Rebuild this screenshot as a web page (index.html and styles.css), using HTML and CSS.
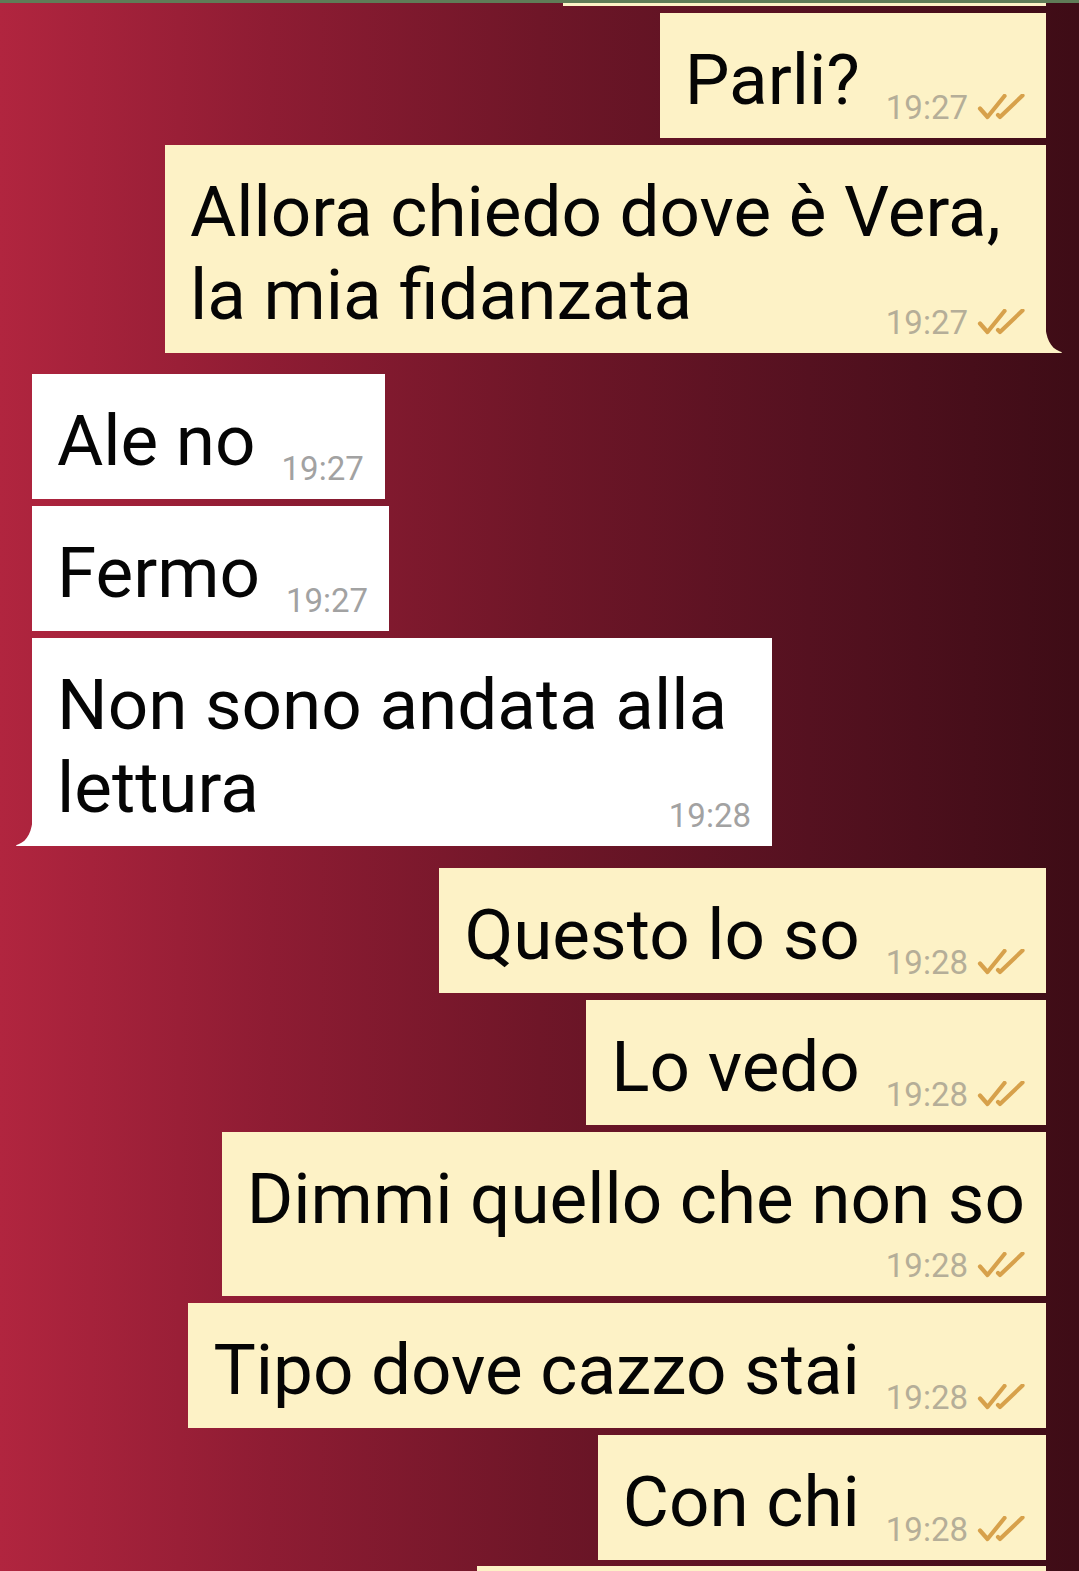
FILE: index.html
```html
<!DOCTYPE html>
<html lang="it">
<head>
<meta charset="utf-8">
<title>Chat</title>
<link rel="stylesheet" href="styles.css">
</head>
<body>
<div class="screen">
  <div class="topbar"></div>
  <div class="chat">
    <div class="bubble out frag-top"></div>

    <div class="bubble out">
      <span class="text">Parli?</span>
      <span class="meta"><span class="time">19:27</span><svg class="ticks" viewBox="0 0 48 26" width="48" height="26"><path d="M3 14.5 L10.5 23 L27.5 2"/><path d="M21 21 L23 23 L45.5 1.5"/></svg></span>
    </div>

    <div class="bubble out">
      <span class="text line-full">Allora chiedo dove è Vera,</span>
      <span class="text line-last">la mia fidanzata</span>
      <span class="meta"><span class="time">19:27</span><svg class="ticks" viewBox="0 0 48 26" width="48" height="26"><path d="M3 14.5 L10.5 23 L27.5 2"/><path d="M21 21 L23 23 L45.5 1.5"/></svg></span>
      <svg class="tail tail-right" viewBox="0 0 18 30" width="18" height="30"><path d="M0 0 C1 15 5 25 15 28.4 C17.6 29.2 17.4 30 15 30 L0 30 Z"/></svg>
    </div>

    <div class="bubble in group-start">
      <span class="text">Ale no</span>
      <span class="meta"><span class="time">19:27</span></span>
    </div>

    <div class="bubble in">
      <span class="text">Fermo</span>
      <span class="meta"><span class="time">19:27</span></span>
    </div>

    <div class="bubble in">
      <span class="text line-full">Non sono andata alla</span>
      <span class="text line-last">lettura</span>
      <span class="meta"><span class="time">19:28</span></span>
      <svg class="tail tail-left" viewBox="0 0 18 30" width="18" height="30"><path d="M18 0 C17 15 13 25 3 28.4 C0.4 29.2 0.6 30 3 30 L18 30 Z"/></svg>
    </div>

    <div class="bubble out group-start2">
      <span class="text">Questo lo so</span>
      <span class="meta"><span class="time">19:28</span><svg class="ticks" viewBox="0 0 48 26" width="48" height="26"><path d="M3 14.5 L10.5 23 L27.5 2"/><path d="M21 21 L23 23 L45.5 1.5"/></svg></span>
    </div>

    <div class="bubble out">
      <span class="text">Lo vedo</span>
      <span class="meta"><span class="time">19:28</span><svg class="ticks" viewBox="0 0 48 26" width="48" height="26"><path d="M3 14.5 L10.5 23 L27.5 2"/><path d="M21 21 L23 23 L45.5 1.5"/></svg></span>
    </div>

    <div class="bubble out stack">
      <span class="text">Dimmi quello che non so</span>
      <span class="meta"><span class="time">19:28</span><svg class="ticks" viewBox="0 0 48 26" width="48" height="26"><path d="M3 14.5 L10.5 23 L27.5 2"/><path d="M21 21 L23 23 L45.5 1.5"/></svg></span>
    </div>

    <div class="bubble out">
      <span class="text">Tipo dove cazzo stai</span>
      <span class="meta"><span class="time">19:28</span><svg class="ticks" viewBox="0 0 48 26" width="48" height="26"><path d="M3 14.5 L10.5 23 L27.5 2"/><path d="M21 21 L23 23 L45.5 1.5"/></svg></span>
    </div>

    <div class="bubble out">
      <span class="text">Con chi</span>
      <span class="meta"><span class="time">19:28</span><svg class="ticks" viewBox="0 0 48 26" width="48" height="26"><path d="M3 14.5 L10.5 23 L27.5 2"/><path d="M21 21 L23 23 L45.5 1.5"/></svg></span>
    </div>

    <div class="bubble out frag-bottom"></div>
  </div>
</div>
</body>
</html>
```

FILE: styles.css
```css
html, body {
  margin: 0;
  padding: 0;
}

body {
  width: 1079px;
  height: 1571px;
  overflow: hidden;
  font-family: Roboto, "Noto Sans", "Liberation Sans", sans-serif;
}

.screen {
  width: 1079px;
  height: 1571px;
  background: linear-gradient(to right, #b1253f 0%, #8e1c33 25%, #6f1628 50%, #551120 75%, #3e0c16 100%);
  overflow: hidden;
}

.topbar {
  height: 3px;
  background: #5f7c57;
}

.chat {
  display: flex;
  flex-direction: column;
  gap: 7px;
}

.bubble {
  position: relative;
  display: flex;
  flex-wrap: wrap;
  align-items: flex-end;
  justify-content: flex-end;
  column-gap: 26px;
  padding: 25px 21px 17px 25px;
  box-sizing: border-box;
}

.bubble.out {
  align-self: flex-end;
  margin-right: 33px;
  background: #fdf2c6;
  max-width: 881px;
}

.bubble.in {
  align-self: flex-start;
  margin-left: 32px;
  background: #ffffff;
  max-width: 740px;
}

.text {
  font-size: 71px;
  line-height: 83px;
  color: #050505;
  flex: 0 1 auto;
}

.line-full {
  flex-basis: 100%;
}

.line-last {
  flex-grow: 1;
}

.meta {
  display: block;
  font-size: 33px;
  line-height: 33px;
  margin-bottom: -3px;
  white-space: nowrap;
}

.out .time {
  color: #b5ae98;
}

.in .time {
  color: #a2a2a2;
}

.ticks {
  margin-left: 9px;
  fill: none;
  stroke: #d7a14b;
  stroke-width: 4.2;
  stroke-linecap: round;
  stroke-linejoin: round;
  vertical-align: -1px;
}

.stack {
  flex-direction: column;
  flex-wrap: nowrap;
  align-items: flex-end;
}

.stack .meta {
  margin-top: 9px;
}

.tail {
  position: absolute;
  bottom: 0;
}

.tail-right {
  right: -17px;
  fill: #fdf2c6;
}

.tail-left {
  left: -17px;
  fill: #ffffff;
}

.group-start {
  margin-top: 14px;
}

.group-start2 {
  margin-top: 15px;
}

.frag-top {
  width: 483px;
  height: 3px;
  padding: 0;
}

.frag-bottom {
  width: 569px;
  height: 20px;
  padding: 0;
  margin-top: -1px;
}
```
